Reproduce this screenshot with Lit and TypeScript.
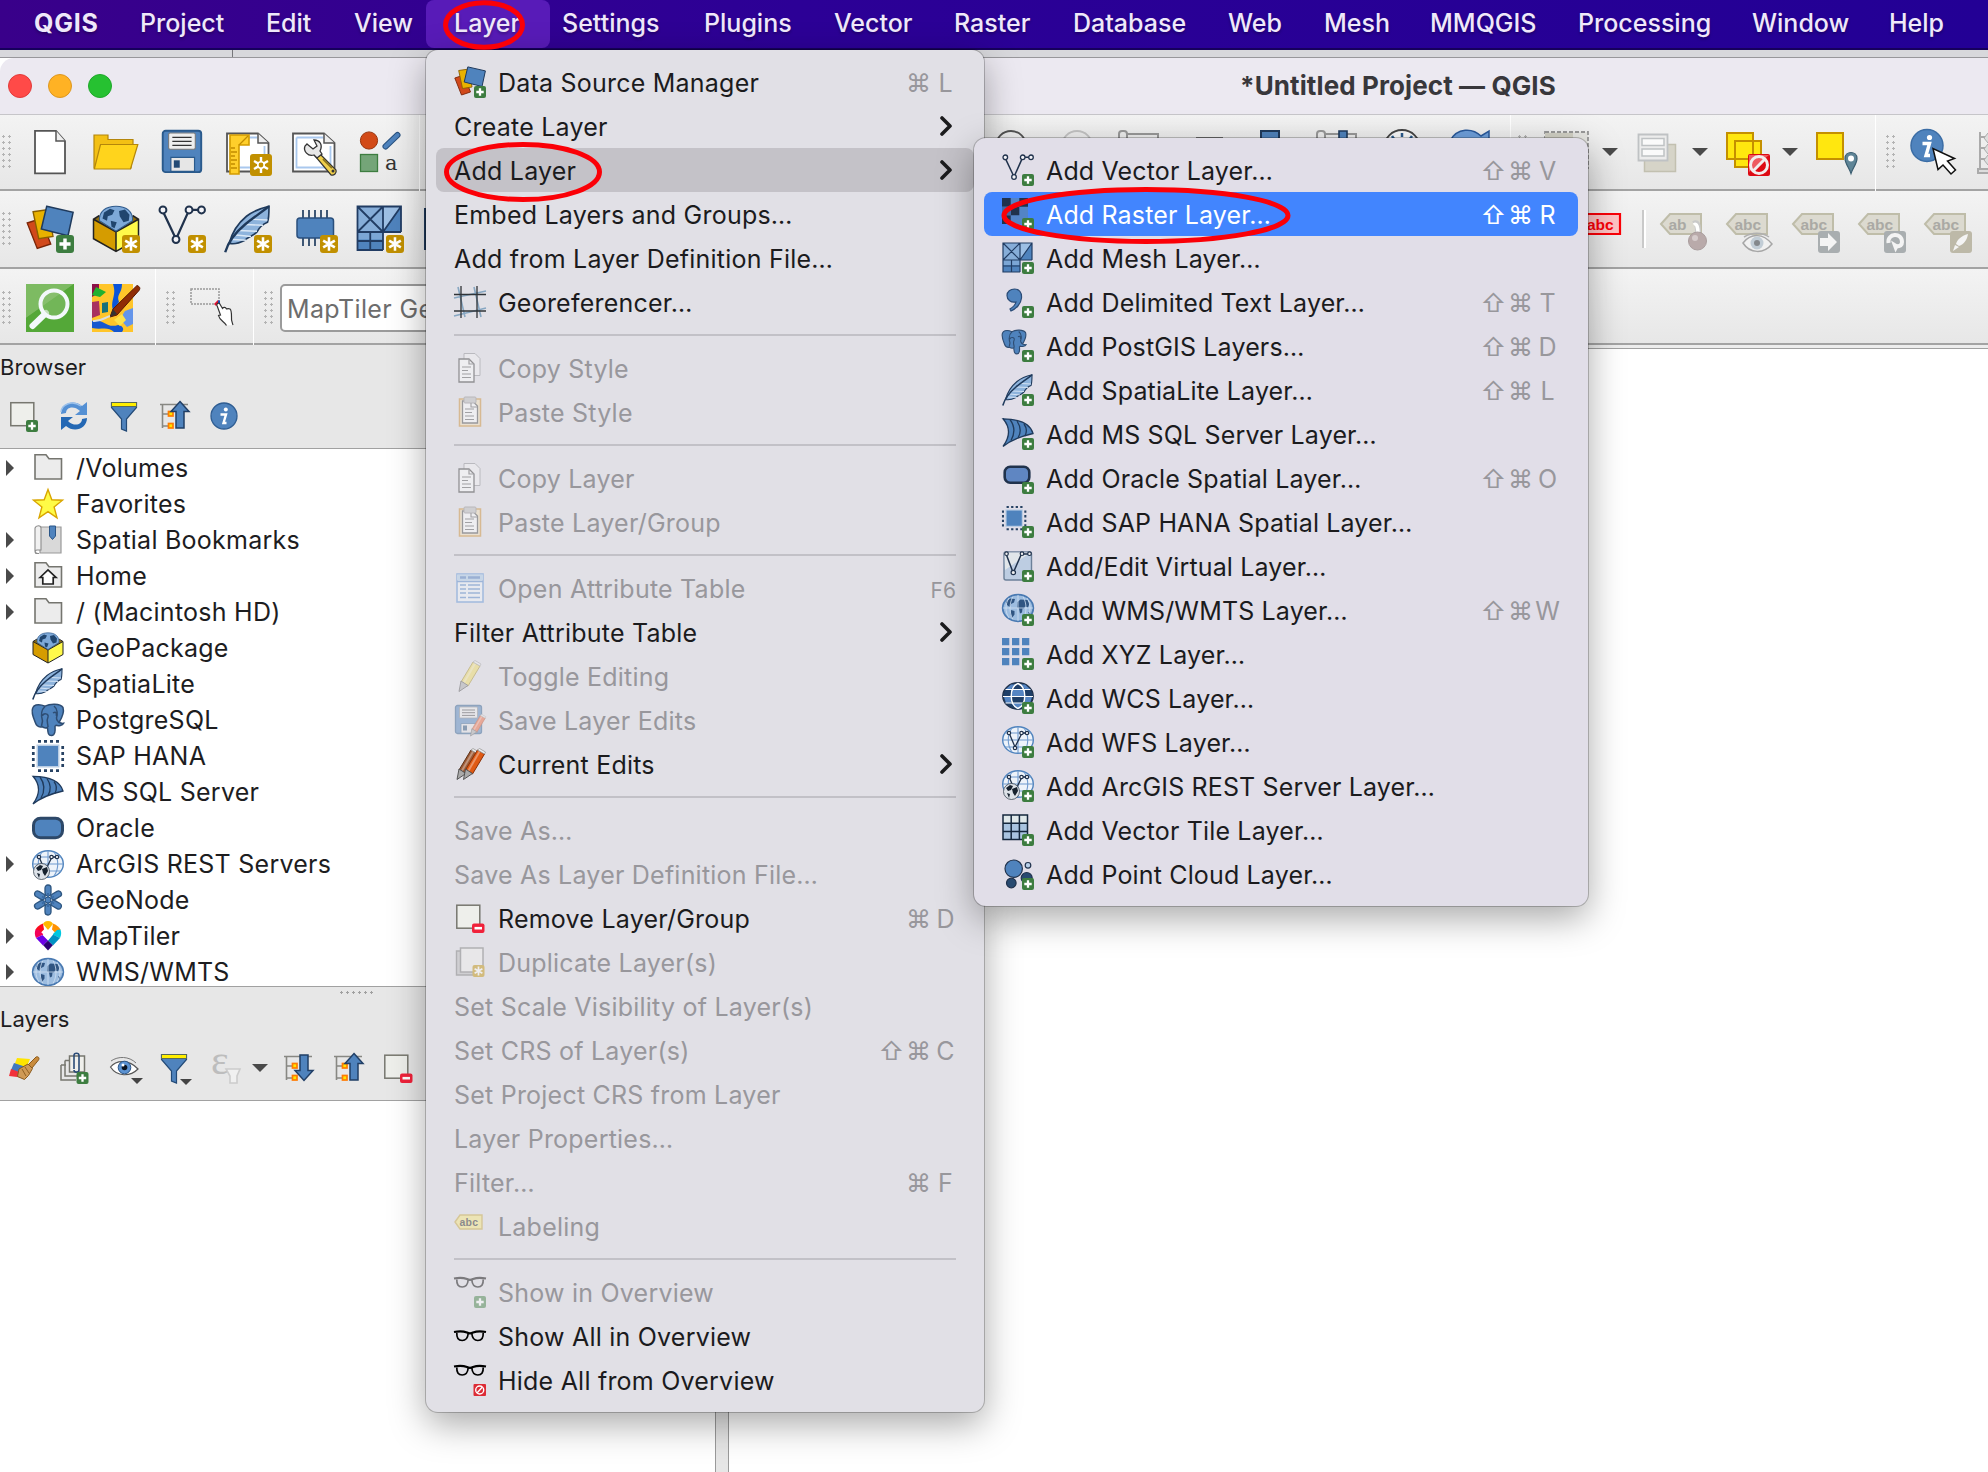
import { LitElement, html, svg, css, nothing, type TemplateResult } from "lit";
import { customElement, property } from "lit/decorators.js";
import { classMap } from "lit/directives/class-map.js";

const BLUE = "#4f83bd";
const NAVY = "#20324c";

/* Badges live in the lower right corner of a 32-unit icon. */
const plusBadge = svg`<rect x="20" y="20" width="12" height="12" rx="2" fill="#3d7d40"/><path d="M26 22.3v7.4M22.3 26h7.4" stroke="#fff" stroke-width="2.3"/>`;
const starBadge = svg`<rect x="20" y="20" width="12" height="12" rx="2" fill="#c19000"/><path d="M26 21.5v9M22.1 23.7l7.8 4.6M22.1 28.3l7.8-4.6" stroke="#fff" stroke-width="1.7"/>`;
const noBadge = svg`<rect x="19.5" y="20" width="12.5" height="12" rx="1" fill="#dd2c36"/><circle cx="25.7" cy="26" r="4" fill="none" stroke="#fff" stroke-width="1.4"/><path d="M23.2 28.7l5-5.4" stroke="#fff" stroke-width="1.4"/>`;
const minusBadge = svg`<rect x="18" y="21.5" width="12.5" height="9.5" rx="2" fill="#f0223a"/><path d="M20.5 26.2h7.5" stroke="#fff" stroke-width="2.6"/>`;

const vee = svg`<path d="M3.8 5.4L11.2 21M12.8 21L19.8 5.4M23 3.3h3.8" fill="none" stroke="${NAVY}" stroke-width="1.5"/><g fill="#f4f4f8" stroke="${NAVY}" stroke-width="1.3"><circle cx="3.3" cy="3.3" r="2.3"/><circle cx="12" cy="23" r="2.3"/><circle cx="20.7" cy="3.3" r="2.3"/><circle cx="29" cy="3.3" r="2.3"/></g>`;
const mesh = svg`<path d="M1 1h29v17H18v12H1z" fill="${BLUE}"/><path d="M1 1h17v17H1z" fill="#86add8"/><path d="M18 18L30 1H18z" fill="#9dbfe4"/><path d="M1 18h17v5H1z" fill="#7ba6d5"/><path d="M18 30H1V1h29v17M18 1v29M1 18h29M1 1l17 17M18 1L1 18M18 18L30 1M9.5 18v12M1 24h17" fill="none" stroke="#213c63" stroke-width="1.2"/>`;
const feather = svg`<path d="M30 .8C30 5 30 9 29 11.500C25 13 23.500 15 22 18C19 21 16 21 14 23.500C10 25.500 7 26.500 3.500 25.500C5.500 18 9.500 12 15 7.500 20 3.500 25 2 30 .8z" fill="#8db3dc" stroke="#1f3a5c" stroke-width="1.1"/><path d="M10 17l12 .5M8 20l10 1M6 23l9 .5M14 13l12 .5M19 9.500l10 .500" stroke="#dbe8f6" stroke-width=".9"/><path d="M.8 31.500C3 24 8 18 14 13S25 5 30 .8" fill="none" stroke="#1f3a5c" stroke-width="1.6"/>`;
const elephant = svg`<path d="M4 1c4-1 7 .3 9 1.200C18-.5 28-.8 31 3.500c1.500 5-1.500 11-4 15 2 .8 3.500 1 4.500.8-1 2-5 3-7.500 2l-1 1c.3 4 .3 9-3.500 9.200-4 .1-3.500-4-4-8-2 1-4 .3-5.500-.8-4 1-6-2-7-5C1 13-.5 7 .7 4 1.400 2 2.500 1.400 4 1z" fill="${BLUE}" stroke="#2e4d73" stroke-width="1.500"/><path d="M13 2.500C9 6 9 12 10.500 17l-1 5M22 2c4 3 3.500 9 2.500 12 0 3 2 3 2 4.500M16 23c0-4-2-6 0-10 1-4-5-4-5.500-1M21 9c3-2 3.500 0 3.500 3" fill="none" stroke="#2e4d73" stroke-width="1.500"/>`;
const sail = svg`<path d="M1 .8C14 1 28 4 31 15.500 20 18 9 22 1 28.500 8 19 9 10 1 .8z" fill="${BLUE}" stroke="#1f3a5c" stroke-width="1.3"/><path d="M8 1.500c5 7 5 14 1 21M15 3c4 6 4 12 1 17M22 6c3 4 3 8 1 12" fill="none" stroke="#1f3a5c" stroke-width="1.3"/>`;
const sap = svg`<rect x="4.500" y="4.500" width="23" height="23" fill="#b9cde4"/><rect x="6" y="6" width="20" height="20" fill="${BLUE}"/><path d="M6 1.300h21M6 30.700h21M1.300 6v21M30.700 6v21" stroke="#274263" stroke-width="2.700" stroke-dasharray="3 3"/>`;
const continents = svg`<path d="M4 8l4-3.500 5 .5-1 3.500-3 1.500-1.500 3-2.500-2zM9 16l3.500 1 0 3.500-2.500 3.500-1.500-4zM15.500 8l3-2.500 7 .5 2 3.500-1.500 4-3-1-1 2-1.500 0-.5 4-2 1-1-5-2-1zM26 18l2.500 1-1.500 2.500z" fill="#305582"/>`;
const earth = svg`<ellipse cx="16" cy="14" rx="15.300" ry="13.300" fill="#9dbde0" stroke="#4a7ab2" stroke-width="1.800"/>${continents}<path d="M16 1v26M1 14h30M7 4c-4 6-4 14 0 20M25 4c4 6 4 14 0 20M11 2.500c-4 7-4 16 0 23M21 2.500c4 7 4 16 0 23" stroke="#cfe0f2" stroke-width=".8" fill="none"/>`;
const wire = svg`<ellipse cx="16" cy="14" rx="15.300" ry="13.300" fill="#edf3fa" stroke="#4f83bd" stroke-width="1.400"/><path d="M16 .7v26.600M1 14h30M3 7h26M3 21h26M10 2c-5 7-5 17 0 24M22 2c5 7 5 17 0 24" stroke="#6f9ace" stroke-width="1.100" fill="none"/>`;
const smallVee = svg`<path d="M7.500 8L13 21 19.500 8M20 7h5" stroke="${NAVY}" stroke-width="1.300" fill="none"/><g fill="#fff" stroke="${NAVY}" stroke-width="1.200"><circle cx="7" cy="7" r="1.700"/><circle cx="13" cy="22" r="1.700"/><circle cx="19.500" cy="7" r="1.700"/><circle cx="25" cy="7" r="1.700"/></g>`;
const miniEarth = svg`<circle cx="9.500" cy="21.500" r="8" fill="#dde2e8" stroke="#3b4754" stroke-width=".8"/><path d="M4 18l4-3 3 1-2 4-3 1zM10 19l5-2 1 4-3 5-2-3zM5 23l3 1-1 4z" fill="#17222e"/>`;
const docs = svg`<path d="M10 1.500h11l5 5v17H10z" fill="#f3f3f5" stroke="#8d8d90" stroke-width="1"/><path d="M5 7h10l5 5v18H5z" fill="#fff" stroke="#333" stroke-width="1.300"/><path d="M15 7v5h5M8 15h9M8 18.500h6M8 22h9M8 25.500h9" fill="none" stroke="#555" stroke-width="1.200"/>`;
const clip = svg`<rect x="5.500" y="3" width="21" height="27" fill="#f3e2b9" stroke="#cc8a2d" stroke-width="1.500"/><path d="M8.500 5h10l5 5v17h-15z" fill="#fff" stroke="#444" stroke-width="1.300"/><rect x="10" y="1" width="12" height="6" rx="1" fill="#bbb" stroke="#888"/><path d="M17 7v4h6M11 13h9M11 16.500h7M11 20h9M11 23.500h9" fill="none" stroke="#555" stroke-width="1.100"/>`;
const pencil = (body: string, edge: string) => svg`<path d="M19 2l7 4-12 20-7-4z" fill="${body}" stroke="${edge}" stroke-width="1"/><path d="M21.200 3.300L9.500 23.500" stroke="#fff" stroke-opacity=".35" stroke-width="2"/><path d="M7 21l7 4.500L5 31.500z" fill="#a9a9a9" stroke="#4a4a4a" stroke-width=".9"/><path d="M19 2l2-1.500 6 3.500-1 2z" fill="#eee" stroke="#999" stroke-width=".8"/>`;
const floppy = svg`<rect x="1.500" y="1.500" width="26" height="28" rx="2" fill="${BLUE}" stroke="#2a5a8c" stroke-width="1.300"/><rect x="5.500" y="3" width="18" height="11" rx="1" fill="#eee" stroke="#777" stroke-width=".7"/><path d="M8 6h13M8 8.700h13M8 11.400h13" stroke="#333" stroke-width=".9"/><path d="M7 19.500h16v9.500H7z" fill="#e6e6e6" stroke="#2a5a8c" stroke-width=".8"/><path d="M9 21.500h4v5H9z" fill="#234a74"/>`;
const glasses = (y: number) => svg`<g transform="translate(0 ${y})" fill="none" stroke="#000" stroke-width="2.200"><path d="M0 1.500c5-1 9-1 13 .5 1.500.8 4.500.8 6 0 4-1.500 8-1.500 13-.5"/><path d="M2.800 2.500c-.2 4.500 1.300 7.500 5.400 7.500 4 0 5.600-3 6-7M29.200 2.500c.2 4.500-1.300 7.500-5.400 7.500-4 0-5.600-3-6-7" stroke-width="1.700"/></g>`;
const sources = svg`<path d="M.8 12L10 9l6.500 17L7.500 29z" fill="#d1491b" stroke="#7a2508" stroke-width=".9"/><path d="M4.700 4.500L15 3l3 18-9.500 1.500z" fill="#e8b200" stroke="#8a5f00" stroke-width=".9"/><path d="M13.800.9L31.400 4.900 28 20.500 10.200 16z" fill="${BLUE}" stroke="#1f3a5c" stroke-width="1"/>`;
const pkg = svg`<path d="M1 9.500L16 2l15 7.500L16 18z" fill="#8a6a10"/><path d="M1 9.500l15 8.500v13L1 22.500z" fill="#d59c00"/><path d="M31 9.500L16 18v13l15-8.500z" fill="#fff94a"/><path d="M5 7L1 9.500v13L16 31l15-8.500v-13L27 7M1 9.500L16 18l15-8.500M16 18v13" fill="none" stroke="#222" stroke-width="1"/><path d="M5 10.500C4.500 4 9.500.8 16 .8S27.500 4 27 10.500L16 17.500z" fill="#7ea9d8" stroke="#2f5a8c" stroke-width=".7"/><path d="M8 5l4-2.500 3 1-1.500 3-3 1-.5 3-3-1.500zM18 4l4-1 3 3.500-.5 4-3.500 1-2.500-4zM12.500 10.500l4 1-1.500 4-2-1z" fill="#20456e"/>`;
const folder = svg`<path d="M3 2.800h11l3 4h12.500V27H3z" fill="#ececec" stroke="#75756f" stroke-width="1.600"/>`;
const filter = svg`<path d="M3.500 2.500h25v5L18.500 19v12l-5-2V19L3.500 7.500z" fill="${BLUE}" stroke="#234a77" stroke-width="1.200"/><path d="M3.500 2.500h25v4h-25z" fill="#ffee00" stroke="#56695a" stroke-width="1"/>`;
const treeLines = svg`<path d="M2 4.500h28M4.500 5v23M4.500 14h7M4.500 26h7" fill="none" stroke="#888883" stroke-width="1.600"/><g fill="#ffe500" stroke="#ff7b00" stroke-width="1.700"><rect x="10.500" y="11.500" width="4.500" height="4.500"/><rect x="10.500" y="23.500" width="4.500" height="4.500"/></g>`;
const square = svg`<rect x="2.800" y="3.200" width="23" height="23" fill="#eeefeb" stroke="#77776f" stroke-width="1.500"/>`;
const eye = svg`<path d="M1.500 15C7 8 20 7 29 17 21 25 8 25 1.500 15z" fill="#fff" stroke="#555" stroke-width="1.200"/><path d="M2 9c7-5 18-5 25 2" fill="none" stroke="#777" stroke-width="1"/><circle cx="15.500" cy="15.500" r="6.300" fill="#5b92d2" stroke="#2c5687"/><circle cx="15.500" cy="15.500" r="2.800" fill="#0b1420"/><circle cx="14" cy="13" r="1.500" fill="#fff"/>`;
const info = svg`<circle cx="16" cy="16" r="13" fill="${BLUE}" stroke="#2f5d92" stroke-width="1.300"/><circle cx="17.800" cy="9.500" r="2" fill="#fff"/><path d="M12.500 14.500h5.500l-2.500 8.500h3" fill="none" stroke="#fff" stroke-width="2.400"/>`;
const tag = (label: string) => svg`<path d="M1 19L10 9h31v20H10z" fill="#dcdad0" stroke="#bfbda9" stroke-width="2"/><text x="8.500" y="24.500" font-family="Liberation Sans" font-weight="700" font-size="15.500" fill="#aaa9a4">${label}</text>`;
const greyBadge = svg`<rect x="26" y="26" width="22" height="22" rx="3" fill="#a9aeb0"/>`;
const page = svg`<path d="M3 5.500h31L44.500 15v28.500H3z" fill="#fff" stroke="#555" stroke-width="1.800"/><path d="M6.500 9.500h27M40.500 18v21.500h-34V9.500" fill="none" stroke="#a9c8ee" stroke-width="1.800"/><path d="M34 5.500V15h10.500" fill="#eee" stroke="#555" stroke-width="1.500"/>`;

type Glyph = { view: number; body: TemplateResult };
const g32 = (body: TemplateResult): Glyph => ({ view: 32, body });
const g48 = (body: TemplateResult): Glyph => ({ view: 48, body });

const GLYPHS: Record<string, Glyph> = {
  sources: g32(svg`${sources}${plusBadge}`),
  geopackage: g32(pkg),
  geopackageNew: g32(svg`${pkg}${starBadge}`),
  vectorAdd: g32(svg`${vee}${plusBadge}`),
  vectorNew: g32(svg`${vee}${starBadge}`),
  featherAdd: g32(svg`${feather}${plusBadge}`),
  featherNew: g32(svg`${feather}${starBadge}`),
  feather: g32(feather),
  meshAdd: g32(svg`${mesh}${plusBadge}`),
  meshNew: g32(svg`${mesh}${starBadge}`),
  rasterAdd: g32(svg`<path d="M0 0h26v26H0z" fill="#5384c6"/><path d="M0 0h8.700v8.700H0zM17.300 0H26v8.700h-8.700zM8.700 8.700h8.600v8.600H8.700zM0 17.300h8.700V26H0z" fill="${NAVY}"/><path d="M0 8.700h8.700v8.600H0z" fill="#3f69a8"/>${plusBadge}`),
  commaAdd: g32(svg`<path d="M12.500 3C17 3 20 6.500 19.500 12 19 18 14 23 9 25l-1-2c3-2 5.500-4 6-7-5 1-9-2-9-6.500C5 5.500 8.500 3 12.500 3z" fill="${BLUE}" stroke="#2b4c77" stroke-width="1.200"/>${plusBadge}`),
  elephant: g32(elephant),
  elephantAdd: g32(svg`<g transform="scale(.76)">${elephant}</g>${plusBadge}`),
  sail: g32(svg`<g transform="translate(0 -.5)">${sail}</g>`),
  sailAdd: g32(svg`${sail}${plusBadge}`),
  oracle: g32(svg`<rect x="1.500" y="6.200" width="29" height="19.600" rx="7" fill="${BLUE}" stroke="#2d4868" stroke-width="3"/>`),
  oracleAdd: g32(svg`<rect x="2.700" y="4.700" width="24.600" height="16" rx="5.500" fill="#5f86c2" stroke="${NAVY}" stroke-width="2.600"/>${plusBadge}`),
  sap: g32(sap),
  sapAdd: g32(svg`<g transform="scale(.76)">${sap}</g>${plusBadge}`),
  virtualAdd: g32(svg`<rect x="2" y="2" width="27.500" height="28" rx="2" fill="#bdcde2" stroke="#6c8099" stroke-width="1.400"/><path d="M2.500 2.500h26L3 20z" fill="#e1e6ea"/><path d="M4.500 5L10.500 21M12 21L19 5M20 4h9" stroke="${NAVY}" stroke-width="1.500" fill="none"/><g fill="#eee" stroke="${NAVY}" stroke-width="1.200"><circle cx="4.500" cy="3.700" r="1.800"/><circle cx="11.300" cy="22.500" r="2.200"/><circle cx="20" cy="3.700" r="1.800"/><circle cx="27.500" cy="3.700" r="1.800"/></g>${plusBadge}`),
  earth: g32(svg`<g transform="translate(0 2)">${earth}</g>`),
  earthAdd: g32(svg`${earth}${plusBadge}`),
  xyzAdd: g32(svg`<path d="M0 0h7.300v7.300H0zM10 0h7.300v7.300H10zM20 0h7.300v7.300H20zM0 10h7.300v7.300H0zM10 10h7.300v7.300H10zM20 10h7.300v7.300H20zM0 20h7.300v7.300H0zM10 20h7.300v7.300H10z" fill="${BLUE}"/>${plusBadge}`),
  wcsAdd: g32(svg`<ellipse cx="16" cy="14" rx="15.200" ry="13.200" fill="#1f3f68" stroke="${NAVY}" stroke-width="1.400"/><path d="M9 2.500h5L9 7H4zM23 2.500h-5L23 7h5zM9 8h14v6H9zM2 15h7v6H4zM30 15h-7v6h5zM9 21h14l-5 5.500h-4z" fill="#5585c3"/><path d="M3.500 7.500h25M1 14.500h30M3.500 21h25" stroke="#fff" stroke-width="1.200"/><path d="M16 1.500C7 5 7 23 16 26.500 25 23 25 5 16 1.500z" fill="none" stroke="#fff" stroke-width="1.400"/>${plusBadge}`),
  wfsAdd: g32(svg`${wire}${smallVee}${plusBadge}`),
  arcgis: g32(svg`<g transform="translate(0 2)">${wire}${smallVee}${miniEarth}</g>`),
  arcgisAdd: g32(svg`${wire}${smallVee}${miniEarth}${plusBadge}`),
  tilesAdd: g32(svg`<path d="M1 1h24.500v24.500H1z" fill="#a8c3e0"/><path d="M1 1h24.500v8H1z" fill="#dfe8ea"/><path d="M1 1h24.500v24.500H1zM9.200 1v24.500M17.400 1v24.500M1 9.200h24.500M1 17.400h24.500" fill="none" stroke="#14273d" stroke-width="1.500"/>${plusBadge}`),
  cloudAdd: g32(svg`<g stroke="${NAVY}" stroke-width="1.200"><circle cx="11.700" cy="10.700" r="8.700" fill="${BLUE}"/><circle cx="9.300" cy="25" r="4.800" fill="#284a70"/><circle cx="24.700" cy="20" r="5.500" fill="#284a70"/><circle cx="26" cy="7.300" r="2.800" fill="#b9d0ea"/></g>${plusBadge}`),
  georef: g32(svg`<path d="M0 12l32-7M0 30l32-8M4 1l7 30M20 1l7 30" stroke="#87a7c2" stroke-width="1.600"/><path d="M0 8.500h32M0 25h32M7 0v32M23 0v32" stroke="#303438" stroke-width="1.300"/>`),
  copy: g32(docs),
  paste: g32(clip),
  table: g32(svg`<rect x="3" y="2" width="26" height="28" fill="#eff4fb" stroke="#5d93d6" stroke-width="1.600"/><path d="M3 2.500h26v6H3z" fill="#a9cbe9"/><path d="M6 5.500h6M14 5.500h12" stroke="#4677bd" stroke-width="2.500"/><path d="M3 9.500h26M6 13h6M14 13h12M6 17h6M14 17h12M6 21h6M14 21h12M6 25.500h6M14 25.500h12" stroke="#4f83c8" stroke-width="1.500"/>`),
  pencil: g32(pencil("#f1dc5f", "#a8922a")),
  saveEdits: g32(svg`${floppy}<g transform="translate(13 10) scale(.7)">${pencil("#f0653a", "#b03a12")}</g>`),
  pencils: g32(svg`<g transform="translate(-2 0)">${pencil("#9d5a35", "#5d3218")}</g><g transform="translate(4.500 0)">${pencil("#e05a14", "#8c2f05")}</g>`),
  removeLayer: g32(svg`${square}${minusBadge}`),
  addSquare: g32(svg`<g transform="translate(0 -.5)">${square}</g><g transform="translate(-2 0)">${plusBadge}</g>`),
  duplicate: g32(svg`<path d="M2.500 5h5v20h12v4h-17z" fill="#bbb" stroke="#777" stroke-width="1.400"/><rect x="6.500" y="2" width="22.500" height="24" fill="#f1f1ee" stroke="#777" stroke-width="1.500"/><g transform="translate(-1.500 -1)">${starBadge}</g>`),
  label: g32(svg`<path d="M1 12l5-7h22v14H6z" fill="#fbe97a" stroke="#c9a93a" stroke-width="1.400"/><text x="5.500" y="15.500" font-family="Liberation Sans" font-weight="700" font-size="10.500" fill="#222">abc</text>`),
  glassesAdd: g32(svg`${glasses(1)}${plusBadge}`),
  glasses: g32(glasses(10.5)),
  glassesNo: g32(svg`${glasses(1)}${noBadge}`),
  folder: g32(folder),
  home: g32(svg`${folder}<path d="M8 17.500L16 10l8 7.500h-2.800V24H10.800v-6.500z" fill="#fff" stroke="#222" stroke-width="1.700"/>`),
  star: g32(svg`<path d="M16 1.500l3.800 10.200 10.700.5-8.400 6.700 2.900 11L16 23.700l-9 6.200 2.900-11L1.500 12.200l10.700-.5z" fill="#fffb46" stroke="#d9a500" stroke-width="1.400"/>`),
  bookmark: g32(svg`<path d="M8 3h21v26H8z" fill="#d9d9d9" stroke="#999" stroke-width="1.200"/><path d="M3 4c1-3 6-3 6 0v22h-4c-3 0-2 4 2 3.500H4C2.500 29 3 26 3 24z" fill="#f1f1f1" stroke="#8c8c8c" stroke-width="1.100"/><path d="M17.500 2h6v10l-3 3.500-3-3.500z" fill="${BLUE}" stroke="#2b5688" stroke-width="1"/>`),
  geonode: g32(svg`<g fill="${BLUE}" stroke="#2e5680" stroke-width="1.300">${[0, 60, 120, 180, 240, 300].map((a) => svg`<rect x="13" y="1" width="6" height="11" rx="2.900" transform="rotate(${a} 16 16)"/>`)}</g><path d="M16 9v14M10 12.500l12 7M10 19.500l12-7" stroke="#3a6ba3" stroke-width="2"/><circle cx="16" cy="16" r="3" fill="${BLUE}" stroke="#2e5680"/>`),
  maptiler: g32(svg`<g transform="translate(16 14.500)"><path d="M0-13.500c3 0 4.500 1.500 5 3L0-4.500l-5-6c.5-1.500 2-3 5-3z" fill="#ffb800"/><path d="M5-11c4 1.500 6 3.500 7.500 6L9 0 4-5z" fill="#ff9200"/><path d="M-5-11c-4 1.500-6 3.500-7.500 6L-9 0l5-5z" fill="#fb0a1e"/><path d="M-12.500-5c-1 3-.9 5.500.5 8.500L-4.500 0l-4.500-4.500z" fill="#f3015a"/><path d="M12.500-5c1 3 .9 5.500-.5 8.500L4.500 0l4.500-4.500z" fill="#00c8e0"/><path d="M-12 3.500L-5 11l5-5-5.500-5.500z" fill="#6c00e8"/><path d="M12 3.500L5 11 0 6 5 0z" fill="#0092c4"/><path d="M0 6l4.800 4.800L0 16l-4.800-5.200z" fill="#2d0076"/><path d="M0-5l5 5-5 5.500L-5 0z" fill="#fff"/></g>`),
  refresh: g32(svg`<path d="M3 14C3 3 16-1 24 6l5-4v13H17l5-4C16 5 8 7 8 13z" fill="#5490d4"/><path d="M3 12C4 4 14 0 23 6" fill="none" stroke="#9cc1ea" stroke-width="1.500"/><path d="M29 18c0 11-13 15-21 8l-5 4V17h12l-5 4c6 6 14 4 14-2z" fill="#2468b4"/>`),
  filter: g32(filter),
  filterMenu: g32(svg`${filter}<path d="M22 27h12l-6 6z" fill="#444"/>`),
  collapse: g32(svg`${treeLines}<path d="M22 1.500l9 10h-5V28h-8V11.500h-5z" fill="${BLUE}" stroke="#213f66" stroke-width="1.500"/>`),
  expand: g32(svg`${treeLines}<path d="M18 3h8v15.500h5l-9 10-9-10h5z" fill="${BLUE}" stroke="#213f66" stroke-width="1.500"/>`),
  info: g32(info),
  brush: g32(svg`<path d="M9 6l13 1-4 10-12-3z" fill="#ffe500"/><path d="M6 11l12 4-3 7-12-4z" fill="#3f78c0"/><path d="M3 17l11 4 3 5-16-2z" fill="#f2303a"/><path d="M20 13l8-8c2-1 4 1 2.500 3L24 16z" fill="#c98b3c" stroke="#8a5a1d"/><path d="M11 17l9-5 4.500 4.500-4 7-4 4-7-3z" fill="#d09a55" stroke="#8a5a1d" stroke-width="1"/><path d="M14 17l4 7M17 15l4 6" stroke="#8a5a1d" stroke-width=".9"/>`),
  group: g32(svg`<g fill="none" stroke="#77776f" stroke-width="1.500"><path d="M3 13v15h15M7 8.500v15.500h16M8 13h-5M11 8.500H7"/><rect x="11.500" y="4" width="15" height="16" fill="#f0f0ec"/></g><path d="M16 17V3.500c0-3 5-3 5 0V18c0 3-5 3-5 0" fill="none" stroke="#2b4c77" stroke-width="1.600"/><g transform="translate(-1.500 0)">${plusBadge}</g>`),
  eyeMenu: g32(svg`<g transform="translate(1 0)">${eye}</g><path d="M23 26h12l-6 6z" fill="#444"/>`),
  expression: g32(svg`<text x="3" y="21.500" font-family="Liberation Serif" font-size="42" fill="#bdbdbd">ε</text><path d="M18 17h14l-3 7v7h-7v-7z" fill="#f0f0f0" stroke="#ccc" stroke-width="1.600"/>`),

  page: g48(svg`<path d="M9 2.800h21L39 13v32.300H9z" fill="#fff" stroke="#555" stroke-width="1.800"/><path d="M30 2.800V13h9" fill="#eee" stroke="#555" stroke-width="1.500"/>`),
  open: g48(svg`<path d="M2 7h14v4.500h25V17L39 40H2z" fill="#f3c014" stroke="#b4860b" stroke-width="1.200"/><path d="M8.500 16.500h37.300L38.500 41H2.300z" fill="#ffd41c" stroke="#b4860b" stroke-width="1.200"/>`),
  save: g48(svg`<g transform="translate(2.500 .5) scale(1.480)">${floppy}</g>`),
  layoutNew: g48(svg`${page}<path d="M6 7h19v10H15v29H6z" fill="#ffcf2b" stroke="#d39c00" stroke-width="1.600"/><path d="M7 20h4M7 24h6M7 28h4M7 32h6M7 36h4M7 40h6M15 17l9-9" stroke="#c28c00" stroke-width="1.300"/><rect x="26" y="26" width="22" height="22" rx="3" fill="#c19000"/><path d="M37 29v16M30 33l14 8M30 41l14-8" stroke="#fff" stroke-width="2.400"/><circle cx="37" cy="37" r="3.200" fill="#c19000" stroke="#fff" stroke-width="1.600"/>`),
  layoutManager: g48(svg`${page}<path d="M28 24l18 18c1 3-2 6-5 5L25 28z" fill="#f0cf4a" stroke="#333" stroke-width="1.200"/><path d="M33 31l9 9" stroke="#8a7420" stroke-width="2"/><path d="M17 16l6 5 4-3-3-6c6 0 9 5 6 11l2 3-5 4-3-3c-6 2-11-4-9-9z" fill="#e8e8e8" stroke="#333" stroke-width="1.300"/><circle cx="43" cy="43" r="1.500" fill="#333"/>`),
  styles: g48(svg`<circle cx="13" cy="12.500" r="8.600" fill="#d24a17" stroke="#99340c" stroke-width="1"/><path d="M29.500 18.500L41.500 7" stroke="#28517f" stroke-width="6" stroke-linecap="round"/><path d="M29.500 18.500L41.500 7" stroke="#4f83bd" stroke-width="4" stroke-linecap="round"/><rect x="4.500" y="26.500" width="17" height="17" fill="#74a578" stroke="#3d7d40" stroke-width="1.300"/><text x="29" y="42" font-family="DejaVu Serif" font-size="21" fill="#333">a</text>`),
  chipNew: g48(svg`<path d="M13 5v8M19 5v8M25 5v8M31 5v8M37 5v8M13 33v8M19 33v8M25 33v8" stroke="#2d4868" stroke-width="1.800"/><rect x="7" y="13" width="36.500" height="20" rx="3" fill="${BLUE}" stroke="#2a4f7c" stroke-width="1.500"/><g transform="scale(1.500)">${starBadge}</g>`),
  panel: g48(svg`<rect x="3" y="4" width="40" height="40" fill="${BLUE}" stroke="#1f3a5c" stroke-width="2"/>`),
  search: g48(svg`<path d="M0 0h48v48H0z" fill="#55a63c"/><path d="M0 0h48L0 34z" fill="#7dbb62"/><path d="M0 34L48 0v48H0z" fill="#54a838"/><path d="M20 29L6.500 42" stroke="#f3f8fb" stroke-width="6" stroke-linecap="round"/><circle cx="28" cy="20" r="13.500" fill="#8fc477" fill-opacity=".5" stroke="#f3f8fb" stroke-width="4"/>`),
  mapBrush: g48(svg`<path d="M0 0h41v48H0z" fill="#ffc52a"/><path d="M0 0h7v9L0 13z" fill="#8c1047"/><path d="M4 3l10 5-6 5-8-2z" fill="#22b02f"/><path d="M21 0h9c0 10-6 10-3 18L21 26c-3-10 4-14 0-26z" fill="#0b55d8"/><path d="M0 18l7-1 1 14-8 3z" fill="#a8315f"/><path d="M10 19l6-1v10l-6 1z" fill="#17707a"/><path d="M33 27l8-3v16l-6 3-7-8z" fill="#6495ea"/><path d="M0 37c10-4 14 8 26 4 4 0 7 4 4 7H22c-6-6-12-2-22-4z" fill="#1557d0"/><path d="M22 36l8-6 4 6-6 6z" fill="#ffe24a"/><path d="M45 1.500c3 1 3.500 3 2 5L25 31l-7 2 3-8z" fill="#8f2c05" stroke="#591700" stroke-width="1"/><path d="M21 25l4 5-7 3z" fill="#333"/><path d="M18 32C12 34 8 38 1 37" stroke="#ddd" stroke-width="2" fill="none"/>`),
  selectHand: g48(svg`<path d="M1 5h28v15H1z" fill="none" stroke="#999" stroke-width="1.500" stroke-dasharray="2 1"/><path d="M25 21l4-4" stroke="#e01030" stroke-width="3"/><path d="M28 18h2" stroke="#1850c0" stroke-width="3"/><path d="M43 41c-1-3-2-5-1.500-8 0-4 0-7-1.500-8-2-1-3 0-3.500 0-1-2-3-2-4-.5l-3-5c-1.500-1-3 .5-2.500 2l3.500 9.500-2 .5c1 5 6 6 8 10" fill="#fff" stroke="#333" stroke-width="1.200"/>`),
  lens: g48(svg`<circle cx="24" cy="18" r="15" fill="#f4f4f4" stroke="#555" stroke-width="1.800"/>`),
  lensOff: g48(svg`<circle cx="24" cy="18" r="15" fill="#eee" stroke="#c4c4c4" stroke-width="1.800"/>`),
  sheet: g48(svg`<path d="M6 6h33v30H6z" fill="#eee" stroke="#999" stroke-width="2"/><rect x="0" y="3" width="8" height="34" rx="3" fill="#eee" stroke="#999" stroke-width="2"/>`),
  flat: g48(svg`<path d="M11 9h27v20H11z" fill="#777"/>`),
  book: g48(svg`<path d="M10 3h18v30H10z" fill="${BLUE}" stroke="#1f3a5c" stroke-width="2"/>`),
  sheetMark: g48(svg`<path d="M6 6h33v30H6z" fill="#eee" stroke="#999" stroke-width="2"/><rect x="0" y="3" width="8" height="34" rx="3" fill="#eee" stroke="#999" stroke-width="2"/><path d="M22 3h8v26h-8z" fill="${BLUE}" stroke="#1f3a5c" stroke-width="1.600"/>`),
  clock: g48(svg`<circle cx="19" cy="20" r="18" fill="#fafafa" stroke="#444" stroke-width="1.800"/><path d="M19 5v4M9 8l2 3M29 8l-2 3" stroke="#2a5a8c" stroke-width="2.500"/>`),
  reload: g48(svg`<path d="M1 13C8-1 24 0 32 8l8-5v24H0z" fill="#6fa0dc" stroke="#2a5a9c" stroke-width="1.500"/>`),
  selection: g48(svg`<path d="M1 4h43v36H1z" fill="#e6e6e2" stroke="#999" stroke-width="1.800" stroke-dasharray="4 2"/><path d="M1 5h28v30H1z" fill="#d3d2c6"/>`),
  form: g48(svg`<path d="M10.500 16.500h31v27h-31z" fill="#d6d4c8" stroke="#c2c0b0" stroke-width="1.500"/><path d="M4.500 6.500h29v26h-29z" fill="#ececec" stroke="#bfc2c4" stroke-width="1.800"/><path d="M8 10.500h22v7H8zM8 21h22v7H8z" fill="#fafafa" stroke="#bfc2c4" stroke-width="1.500"/>`),
  deselect: g48(svg`<path d="M3 5h26v26H3zM11 13h26v26H11z" fill="#ffe70f" stroke="#c49000" stroke-width="2"/><rect x="24" y="26" width="22" height="22" rx="2" fill="#de0a13"/><path d="M25 27h20L25 44z" fill="#ee5a60"/><circle cx="35" cy="37" r="8.500" fill="none" stroke="#f2eded" stroke-width="3"/><path d="M29.500 42.500l11-11" stroke="#f2eded" stroke-width="3"/>`),
  locate: g48(svg`<path d="M3 5h26v26H3z" fill="#ffe70f" stroke="#c49000" stroke-width="2"/><path d="M37 45.500c-2-6-6-10-6-15 0-8 12-8 12 0 0 5-4 9-6 15z" fill="#5f8597" stroke="#3a5d70" stroke-width="1.200"/><circle cx="37" cy="30.500" r="3" fill="#fff"/>`),
  identify: g48(svg`<circle cx="17" cy="17.500" r="16" fill="${BLUE}" stroke="#3b6da5" stroke-width="1.500"/><circle cx="19.500" cy="9.500" r="2.600" fill="#fff"/><path d="M12.500 15.500h7l-3.500 12h4" fill="none" stroke="#fff" stroke-width="3.400"/><path d="M23 20.500l5 21 5-4.500 8 9 4.500-4-8-9 7-2.500z" fill="#fff" stroke="#111" stroke-width="1.500"/>`),
  abacus: g48(svg`<path d="M4 4v38M2 41h40v4H2zM4 9h40M4 20h40M4 31h40" stroke="#aaa" stroke-width="2" fill="#ddd"/><path d="M8 10l4-5 4 5-4 5zM8 21l4-5 4 5-4 5zM8 32l4-5 4 5-4 5z" fill="#ddd" stroke="#aaa"/>`),
  redTag: g48(svg`<path d="M0 9h44v20H0z" fill="#ffc4c4" stroke="#fb0007" stroke-width="2.200"/><text x="11" y="24.500" font-family="Liberation Sans" font-weight="700" font-size="15.500" fill="#fb0007">abc</text>`),
  tagPin: g48(svg`${tag("ab")}<path d="M34 19c4-3 4 4 4 10" stroke="#c9c9c9" stroke-width="6" fill="none"/><path d="M34 20c3-3 4 4 4 8" stroke="#fff" stroke-width="3.500" fill="none"/><circle cx="37.500" cy="36" r="9" fill="#b9aaaa" stroke="#a99d9d"/><circle cx="35" cy="33" r="3" fill="#d6cccc"/>`),
  tagEye: g48(svg`${tag("abc")}<path d="M17 38c8-10 20-10 29 1-8 10-22 10-29-1z" fill="#f1f1f1" stroke="#a6a6a6" stroke-width="1.500"/><path d="M18 32c8-5 18-5 25 0" stroke="#b0b0b0" fill="none" stroke-width="1.500"/><circle cx="31" cy="38" r="6.500" fill="#c2cdd6"/><circle cx="31" cy="38" r="3" fill="#84888c"/>`),
  tagMove: g48(svg`${tag("abc")}${greyBadge}<path d="M28 33h8v-5l9 9-9 9v-5h-8z" fill="#f4f4f4"/>`),
  tagRotate: g48(svg`${tag("abc")}${greyBadge}<path d="M30.500 38c-1.500-10 13.500-11 13.500-1 0 3-2.500 4.500-6 4.500" fill="none" stroke="#f4f4f4" stroke-width="4"/><path d="M33 35.500l8 5-3.500 7z" fill="#f4f4f4"/>`),
  tagEdit: g48(svg`${tag("abc")}<rect x="26" y="26" width="22" height="22" rx="3" fill="#bdb9a8"/><path d="M44 29c-7 2-11 6-12 10l3 2c5-2 8-6 9-12zM31 40l-2 6 6-4z" fill="#f4f4f4"/>`),
};

@customElement("tool-icon")
export class ToolIcon extends LitElement {
  @property() name = "";
  static styles = css`
    :host { display: block; width: 32px; height: 32px; flex: none; }
    .art { display: block; width: 100%; height: 100%; overflow: visible; }
  `;
  render() {
    const glyph = GLYPHS[this.name];
    if (!glyph) return nothing;
    return html`<svg class="art" viewBox="0 0 ${glyph.view} ${glyph.view}">${glyph.body}</svg>`;
  }
}

interface Entry {
  label?: string;
  icon?: string;
  keys?: string[];
  plainKey?: string;
  sub?: boolean;
  off?: boolean;
  state?: "open" | "active";
}

const LAYER_MENU: Entry[] = [
  { label: "Data Source Manager", icon: "sources", keys: ["⌘", "L"] },
  { label: "Create Layer", sub: true },
  { label: "Add Layer", sub: true, state: "open" },
  { label: "Embed Layers and Groups…" },
  { label: "Add from Layer Definition File…" },
  { label: "Georeferencer…", icon: "georef" },
  {},
  { label: "Copy Style", icon: "copy", off: true },
  { label: "Paste Style", icon: "paste", off: true },
  {},
  { label: "Copy Layer", icon: "copy", off: true },
  { label: "Paste Layer/Group", icon: "paste", off: true },
  {},
  { label: "Open Attribute Table", icon: "table", off: true, plainKey: "F6" },
  { label: "Filter Attribute Table", sub: true },
  { label: "Toggle Editing", icon: "pencil", off: true },
  { label: "Save Layer Edits", icon: "saveEdits", off: true },
  { label: "Current Edits", icon: "pencils", sub: true },
  {},
  { label: "Save As…", off: true },
  { label: "Save As Layer Definition File…", off: true },
  { label: "Remove Layer/Group", icon: "removeLayer", keys: ["⌘", "D"] },
  { label: "Duplicate Layer(s)", icon: "duplicate", off: true },
  { label: "Set Scale Visibility of Layer(s)", off: true },
  { label: "Set CRS of Layer(s)", off: true, keys: ["⇧", "⌘", "C"] },
  { label: "Set Project CRS from Layer", off: true },
  { label: "Layer Properties…", off: true },
  { label: "Filter…", off: true, keys: ["⌘", "F"] },
  { label: "Labeling", icon: "label", off: true },
  {},
  { label: "Show in Overview", icon: "glassesAdd", off: true },
  { label: "Show All in Overview", icon: "glasses" },
  { label: "Hide All from Overview", icon: "glassesNo" },
];

const shift = (k: string) => ["⇧", "⌘", k];
const ADD_MENU: Entry[] = [
  { label: "Add Vector Layer…", icon: "vectorAdd", keys: shift("V") },
  { label: "Add Raster Layer…", icon: "rasterAdd", keys: shift("R"), state: "active" },
  { label: "Add Mesh Layer…", icon: "meshAdd" },
  { label: "Add Delimited Text Layer…", icon: "commaAdd", keys: shift("T") },
  { label: "Add PostGIS Layers…", icon: "elephantAdd", keys: shift("D") },
  { label: "Add SpatiaLite Layer…", icon: "featherAdd", keys: shift("L") },
  { label: "Add MS SQL Server Layer…", icon: "sailAdd" },
  { label: "Add Oracle Spatial Layer…", icon: "oracleAdd", keys: shift("O") },
  { label: "Add SAP HANA Spatial Layer…", icon: "sapAdd" },
  { label: "Add/Edit Virtual Layer…", icon: "virtualAdd" },
  { label: "Add WMS/WMTS Layer…", icon: "earthAdd", keys: shift("W") },
  { label: "Add XYZ Layer…", icon: "xyzAdd" },
  { label: "Add WCS Layer…", icon: "wcsAdd" },
  { label: "Add WFS Layer…", icon: "wfsAdd" },
  { label: "Add ArcGIS REST Server Layer…", icon: "arcgisAdd" },
  { label: "Add Vector Tile Layer…", icon: "tilesAdd" },
  { label: "Add Point Cloud Layer…", icon: "cloudAdd" },
];

@customElement("drop-menu")
export class DropMenu extends LitElement {
  @property({ attribute: false }) entries: Entry[] = [];
  static styles = css`
    :host { display: block; box-sizing: border-box; padding: 10px; border-radius: 12px; }
    .row { display: flex; align-items: center; height: 44px; padding: 0 18px; border-radius: 8px; color: #1b1b1d; font-size: 25px; letter-spacing: var(--track, 0.2px); white-space: nowrap; }
    .off { color: #98979c; }
    .open { background: #c4c2c8; }
    .active { background: #4285fe; color: #fff; }
    .glyph { margin-right: 12px; }
    .off .glyph { opacity: 0.45; }
    .label { flex: 1; padding-top: 2px; }
    .keys { display: flex; padding-top: 2px; color: #98979c; margin-right: var(--keys-shift, -3px); letter-spacing: 0; }
    .key { width: 27px; text-align: center; }
    .active .keys { color: #fff; }
    .plain { font-size: 21px; color: #98979c; padding-top: 5px; letter-spacing: 0; }
    .chev { width: 12px; height: 22px; margin-right: 4px; fill: none; stroke: #1b1b1d; stroke-width: 3.6; stroke-linecap: round; stroke-linejoin: round; }
    .rule { height: 2px; margin: 10px 18px; background: #c2c1c7; }
  `;
  private row(e: Entry) {
    if (!e.label) return html`<div class="rule"></div>`;
    const classes = { row: true, off: !!e.off, open: e.state === "open", active: e.state === "active" };
    return html`<div class=${classMap(classes)}>
      ${e.icon ? html`<tool-icon class="glyph" name=${e.icon}></tool-icon>` : nothing}
      <span class="label">${e.label}</span>
      ${e.keys ? html`<span class="keys">${e.keys.map((k) => html`<span class="key">${k}</span>`)}</span>` : nothing}
      ${e.plainKey ? html`<span class="plain">${e.plainKey}</span>` : nothing}
      ${e.sub ? html`<svg class="chev" viewBox="0 0 12 22"><path d="M2 3l8 8-8 8"/></svg>` : nothing}
    </div>`;
  }
  render() {
    return this.entries.map((e) => this.row(e));
  }
}

const BAR = ["QGIS", "Project", "Edit", "View", "Layer", "Settings", "Plugins", "Vector", "Raster", "Database", "Web", "Mesh", "MMQGIS", "Processing", "Window", "Help"];

const TREE: { label: string; icon: string; more?: boolean }[] = [
  { label: "/Volumes", icon: "folder", more: true },
  { label: "Favorites", icon: "star" },
  { label: "Spatial Bookmarks", icon: "bookmark", more: true },
  { label: "Home", icon: "home", more: true },
  { label: "/ (Macintosh HD)", icon: "folder", more: true },
  { label: "GeoPackage", icon: "geopackage" },
  { label: "SpatiaLite", icon: "feather" },
  { label: "PostgreSQL", icon: "elephant" },
  { label: "SAP HANA", icon: "sap" },
  { label: "MS SQL Server", icon: "sail" },
  { label: "Oracle", icon: "oracle" },
  { label: "ArcGIS REST Servers", icon: "arcgis", more: true },
  { label: "GeoNode", icon: "geonode" },
  { label: "MapTiler", icon: "maptiler", more: true },
  { label: "WMS/WMTS", icon: "earth", more: true },
];

@customElement("app-root")
export class AppRoot extends LitElement {
  static styles = css`
    :host { display: block; position: relative; width: 1988px; height: 1472px; overflow: hidden; background: #fff; font-family: Inter, "Liberation Sans", sans-serif; color: #1d1d1f; }
    .bar { display: grid; grid-template-columns: 107px 126px 88px 99px 109px 142px 130px 120px 119px 155px 96px 106px 148px 174px 137px 98px; height: 48px; padding-left: 33px; border-bottom: 2px solid #16005c; background: linear-gradient(90deg, #39008a, #2c0096 40%, #230095); }
    .entry { display: flex; align-items: center; padding-bottom: 2px; color: #efe8fa; font-size: 25px; font-weight: 500; letter-spacing: 0; white-space: nowrap; text-shadow: 0 2px 3px rgba(0, 0, 0, 0.3); }
    .entry.app { font-weight: 700; padding-left: 1px; letter-spacing: 0.8px; }
    .entry.on { width: 96px; margin-left: -27px; padding-left: 28px; border-radius: 8px; background: #581bb8; }
    .desk { height: 7px; border-bottom: 1px solid #98979b; background: #d8d8dc; }
    .tick { width: 1px; height: 7px; margin-left: 232px; background: #77777b; }
    .title { display: flex; align-items: center; position: relative; height: 56px; border-bottom: 1px solid #c6c5c9; background: #ece9f1; border-top-left-radius: 14px; }
    .lights { display: flex; gap: 16px; padding-left: 8px; }
    .light { width: 22px; height: 22px; border-radius: 50%; border: 1px solid; }
    .red { background: #ff4a48; border-color: #e23a3a; }
    .amber { background: #ffb224; border-color: #dd9720; }
    .green { background: #26c131; border-color: #1ea82a; }
    .name { margin-left: 1128px; font-size: 26px; font-weight: 700; letter-spacing: 0.1px; color: #38373b; padding-bottom: 2px; }
    .tools { display: flex; height: 76px; }
    .section { display: flex; align-items: center; box-sizing: border-box; border-bottom: 2px solid #a3a3a3; background: linear-gradient(#f3f3f3, #e7e7e7); margin-right: 1px; padding-left: 2px; }
    .section > .grip { margin-right: 15px; }
    .grip { flex: none; width: 9px; height: 34px; background: radial-gradient(circle at 1.5px 1.5px, #b3b3b3 1.2px, transparent 1.4px) 0 0 / 6px 6px; }
    .section tool-icon { width: 48px; height: 48px; margin-right: 18px; }
    .caret { flex: none; width: 0; border: 8px solid transparent; border-top: 8px solid #4a4a4a; border-bottom: 0; }
    .section .drop { margin-right: 10px; }
    .drop + .caret { margin-right: 16px; }
    .s-file { width: 419px; }
    .s-nav { width: 1090px; justify-content: flex-end; padding-right: 0; }
    .s-nav tool-icon:last-child { margin-right: 13px; }
    .s-sel { width: 364px; padding-left: 7px; margin-right: 1px; }
    .s-sel > .grip { margin-right: 17px; }
    .s-info { flex: 1; padding-left: 10px; margin-right: 0; overflow: hidden; }
    .tall { height: 78px; }
    .low .section { padding-top: 4px; }
    .s-src { width: 1200px; margin-right: 0; }
    .s-lab { flex: 1; margin-right: 0; justify-content: flex-end; overflow: hidden; }
    .bead { flex: none; width: 2px; height: 38px; margin-right: 14px; margin-left: 0; background: #c9c9c9; border-right: 2px solid #fff; }
    .s-lab tool-icon:last-child { margin-right: 16px; }
    .s-a { width: 155px; }
    .s-b { width: 97px; padding-left: 10px; }
    .s-c { flex: 1; padding-left: 10px; margin-right: 0; }
    .s-c > .grip { margin-right: 7px; }
    .field { box-sizing: border-box; width: 420px; height: 48px; padding: 0 5px; border: 2px solid #9b9b9b; border-radius: 5px; background: #fff; color: #6d6d6d; font-size: 25px; line-height: 46px; letter-spacing: 0.35px; }
    .work { display: flex; height: 1127px; }
    .side { display: flex; flex-direction: column; width: 715px; background: #e7e7e7; }
    .head { height: 44px; font-size: 22px; line-height: 44px; letter-spacing: 0.05px; }
    .icons { display: flex; align-items: center; gap: 18px; box-sizing: border-box; height: 59px; padding: 0 0 5px 8px; }
    .tight { margin: 0 -4px 0 -6px; }
    .tree { height: 536px; border-top: 1px solid #a1a1a1; border-bottom: 1px solid #a1a1a1; padding-top: 1px; background: #fff; overflow: hidden; }
    .node { display: flex; align-items: center; height: 36px; padding-left: 6px; font-size: 25px; letter-spacing: 0.25px; white-space: nowrap; }
    .twist { width: 0; border: 8px solid transparent; border-left: 8px solid #4a4a4a; border-right: 0; margin-right: 18px; }
    .twist.none { border-left-color: transparent; }
    .node tool-icon { margin-right: 12px; }
    .dots { height: 10px; padding-left: 340px; }
    .dots::before { content: ""; display: block; width: 34px; height: 3px; position: relative; top: 4px; background: radial-gradient(circle at 1.5px 1.5px, #a0a0a0 1.2px, transparent 1.4px) 0 0 / 6px 3px; }
    .list { flex: 1; border-top: 1px solid #a1a1a1; background: #fff; }
    .split { width: 12px; border-left: 1px solid #9a9a9a; border-right: 1px solid #9a9a9a; background: #e6e6e6; }
    .map { flex: 1; margin-top: 3px; border-top: 1px solid #a1a1a1; background: #fff; box-shadow: 0 -3px 0 #ededed; }
    .menu { position: absolute; background: #e1e0e6; box-shadow: 0 0 0 1px rgba(0, 0, 0, 0.22), 0 12px 36px rgba(0, 0, 0, 0.34); }
    .m-layer { left: 426px; top: 50px; width: 558px; height: 1362px; --track: 0.22px; }
    .m-add { left: 974px; top: 138px; width: 614px; height: 768px; background: #e1dee8; --track: 0.15px; --keys-shift: -1px; }
    .marks { position: absolute; left: 0; top: 0; fill: none; stroke: #fb0007; stroke-width: 5; }
  `;

  private icons(names: string[]) {
    return names.map((n) => html`<tool-icon name=${n}></tool-icon>`);
  }

  render() {
    return html`
      <div class="bar">
        ${BAR.map((b) => html`<span class=${classMap({ entry: true, app: b === "QGIS", on: b === "Layer" })}>${b}</span>`)}
      </div>
      <div class="desk"><div class="tick"></div></div>
      <div class="title">
        <div class="lights"><i class="light red"></i><i class="light amber"></i><i class="light green"></i></div>
        <span class="name">*Untitled Project — QGIS</span>
      </div>
      <div class="tools">
        <div class="section s-file"><i class="grip"></i>${this.icons(["page", "open", "save", "layoutNew", "layoutManager", "styles"])}</div>
        <div class="section s-nav">${this.icons(["lens", "lensOff", "sheet", "flat", "book", "sheetMark", "clock", "reload"])}</div>
        <div class="section s-sel">
          <i class="grip"></i>
          ${["selection", "form", "deselect"].map((n) => html`<tool-icon class="drop" name=${n}></tool-icon><i class="caret"></i>`)}
          <tool-icon name="locate"></tool-icon>
        </div>
        <div class="section s-info"><i class="grip"></i>${this.icons(["identify", "abacus"])}</div>
      </div>
      <div class="tools tall">
        <div class="section s-src"><i class="grip"></i>${this.icons(["sources", "geopackageNew", "vectorNew", "featherNew", "chipNew", "meshNew", "panel"])}</div>
        <div class="section s-lab"><tool-icon name="redTag"></tool-icon><i class="bead"></i>${this.icons(["tagPin", "tagEye", "tagMove", "tagRotate", "tagEdit"])}</div>
      </div>
      <div class="tools low">
        <div class="section s-a"><i class="grip"></i>${this.icons(["search", "mapBrush"])}</div>
        <div class="section s-b"><i class="grip"></i>${this.icons(["selectHand"])}</div>
        <div class="section s-c"><i class="grip"></i><div class="field">MapTiler Ge</div></div>
      </div>
      <div class="work">
        <div class="side">
          <div class="head">Browser</div>
          <div class="icons">${this.icons(["addSquare", "refresh", "filter", "collapse", "info"])}</div>
          <div class="tree">
            ${TREE.map((t) => html`<div class="node"><i class=${classMap({ twist: true, none: !t.more })}></i><tool-icon name=${t.icon}></tool-icon><span>${t.label}</span></div>`)}
          </div>
          <div class="dots"></div>
          <div class="head">Layers</div>
          <div class="icons">
            ${this.icons(["brush", "group", "eyeMenu", "filterMenu", "expression"])}<i class="caret tight"></i>${this.icons(["expand", "collapse", "removeLayer"])}
          </div>
          <div class="list"></div>
        </div>
        <div class="split"></div>
        <div class="map"></div>
      </div>
      <drop-menu class="menu m-layer" .entries=${LAYER_MENU}></drop-menu>
      <drop-menu class="menu m-add" .entries=${ADD_MENU}></drop-menu>
      <svg class="marks" width="1988" height="1472">
        <ellipse cx="484" cy="25" rx="38.500" ry="22.300"/>
        <ellipse cx="523" cy="172" rx="76.500" ry="27.600"/>
        <ellipse cx="1146" cy="215.500" rx="142" ry="26"/>
      </svg>
    `;
  }
}
